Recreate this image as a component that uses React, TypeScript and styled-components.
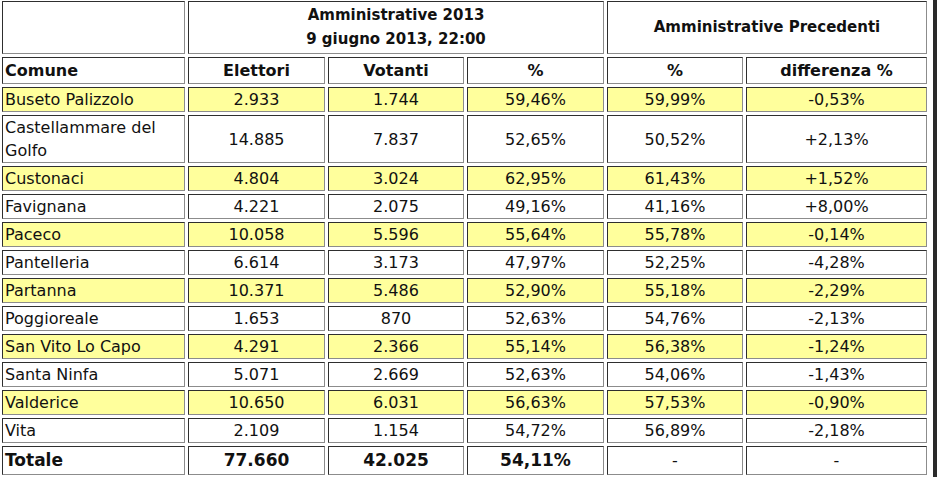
import styled, { createGlobalStyle } from "styled-components";

const GlobalStyle = createGlobalStyle`
  html, body {
    margin: 0;
    padding: 0;
    background: #ffffff;
  }
  body {
    font-family: "DejaVu Sans", Verdana, sans-serif;
    color: #111;
  }
`;

const Page = styled.div`
  display: flex;
  justify-content: space-between;
  width: 937px;
  height: 477px;
  overflow: hidden;
`;

const Edge = styled.div`
  width: 4px;
  background: #2a2a2a;
`;

const Table = styled.table`
  border-collapse: separate;
  border-spacing: 3px;
  table-layout: fixed;
  width: 931px;
  margin: -2px 0 0 -1px;
  align-self: flex-start;
`;

const Cell = styled.td<{ $hl?: boolean; $left?: boolean }>`
  border-top: 1px solid #2e2e2e;
  border-left: 1px solid #2e2e2e;
  border-bottom: 1px solid #8c8c8c;
  border-right: 1px solid #8c8c8c;
  padding: 0 2px;
  font-size: 16px;
  line-height: 23px;
  text-align: ${(p) => (p.$left ? "left" : "center")};
  background: ${(p) => (p.$hl ? "#ffff9c" : "#ffffff")};
  vertical-align: middle;
`;

const TitleCell = styled(Cell).attrs({ as: "th" })`
  font-weight: bold;
  font-size: 15px;
  line-height: 24px;
  padding: 1px 2px 2px;
`;

const HeadCell = styled(Cell).attrs({ as: "th" })`
  font-weight: bold;
  font-size: 16px;
  line-height: 25px;
`;

const TotalCell = styled(Cell)`
  font-weight: bold;
  font-size: 17px;
  line-height: 27px;
`;

type Row = [string, string, string, string, string, string];

const rows: Row[] = [
  ["Buseto Palizzolo", "2.933", "1.744", "59,46%", "59,99%", "-0,53%"],
  ["Castellammare del Golfo", "14.885", "7.837", "52,65%", "50,52%", "+2,13%"],
  ["Custonaci", "4.804", "3.024", "62,95%", "61,43%", "+1,52%"],
  ["Favignana", "4.221", "2.075", "49,16%", "41,16%", "+8,00%"],
  ["Paceco", "10.058", "5.596", "55,64%", "55,78%", "-0,14%"],
  ["Pantelleria", "6.614", "3.173", "47,97%", "52,25%", "-4,28%"],
  ["Partanna", "10.371", "5.486", "52,90%", "55,18%", "-2,29%"],
  ["Poggioreale", "1.653", "870", "52,63%", "54,76%", "-2,13%"],
  ["San Vito Lo Capo", "4.291", "2.366", "55,14%", "56,38%", "-1,24%"],
  ["Santa Ninfa", "5.071", "2.669", "52,63%", "54,06%", "-1,43%"],
  ["Valderice", "10.650", "6.031", "56,63%", "57,53%", "-0,90%"],
  ["Vita", "2.109", "1.154", "54,72%", "56,89%", "-2,18%"],
];

const widths = [183, 137, 136, 137, 136, 181];

export default function App() {
  return (
    <Page>
      <GlobalStyle />
      <Table>
        <colgroup>
          {widths.map((w, i) => (
            <col key={i} style={{ width: w }} />
          ))}
        </colgroup>
        <thead>
          <tr>
            <TitleCell />
            <TitleCell colSpan={3}>
              Amministrative 2013
              <br />9 giugno 2013, 22:00
            </TitleCell>
            <TitleCell colSpan={2}>Amministrative Precedenti</TitleCell>
          </tr>
          <tr>
            <HeadCell $left>Comune</HeadCell>
            <HeadCell>Elettori</HeadCell>
            <HeadCell>Votanti</HeadCell>
            <HeadCell>%</HeadCell>
            <HeadCell>%</HeadCell>
            <HeadCell>differenza %</HeadCell>
          </tr>
        </thead>
        <tbody>
          {rows.map((r, i) => (
            <tr key={r[0]}>
              {r.map((v, j) => (
                <Cell key={j} $hl={i % 2 === 0} $left={j === 0}>
                  {v}
                </Cell>
              ))}
            </tr>
          ))}
          <tr>
            <TotalCell $left>Totale</TotalCell>
            <TotalCell>77.660</TotalCell>
            <TotalCell>42.025</TotalCell>
            <TotalCell>54,11%</TotalCell>
            <Cell>-</Cell>
            <Cell>-</Cell>
          </tr>
        </tbody>
      </Table>
      <Edge />
    </Page>
  );
}
